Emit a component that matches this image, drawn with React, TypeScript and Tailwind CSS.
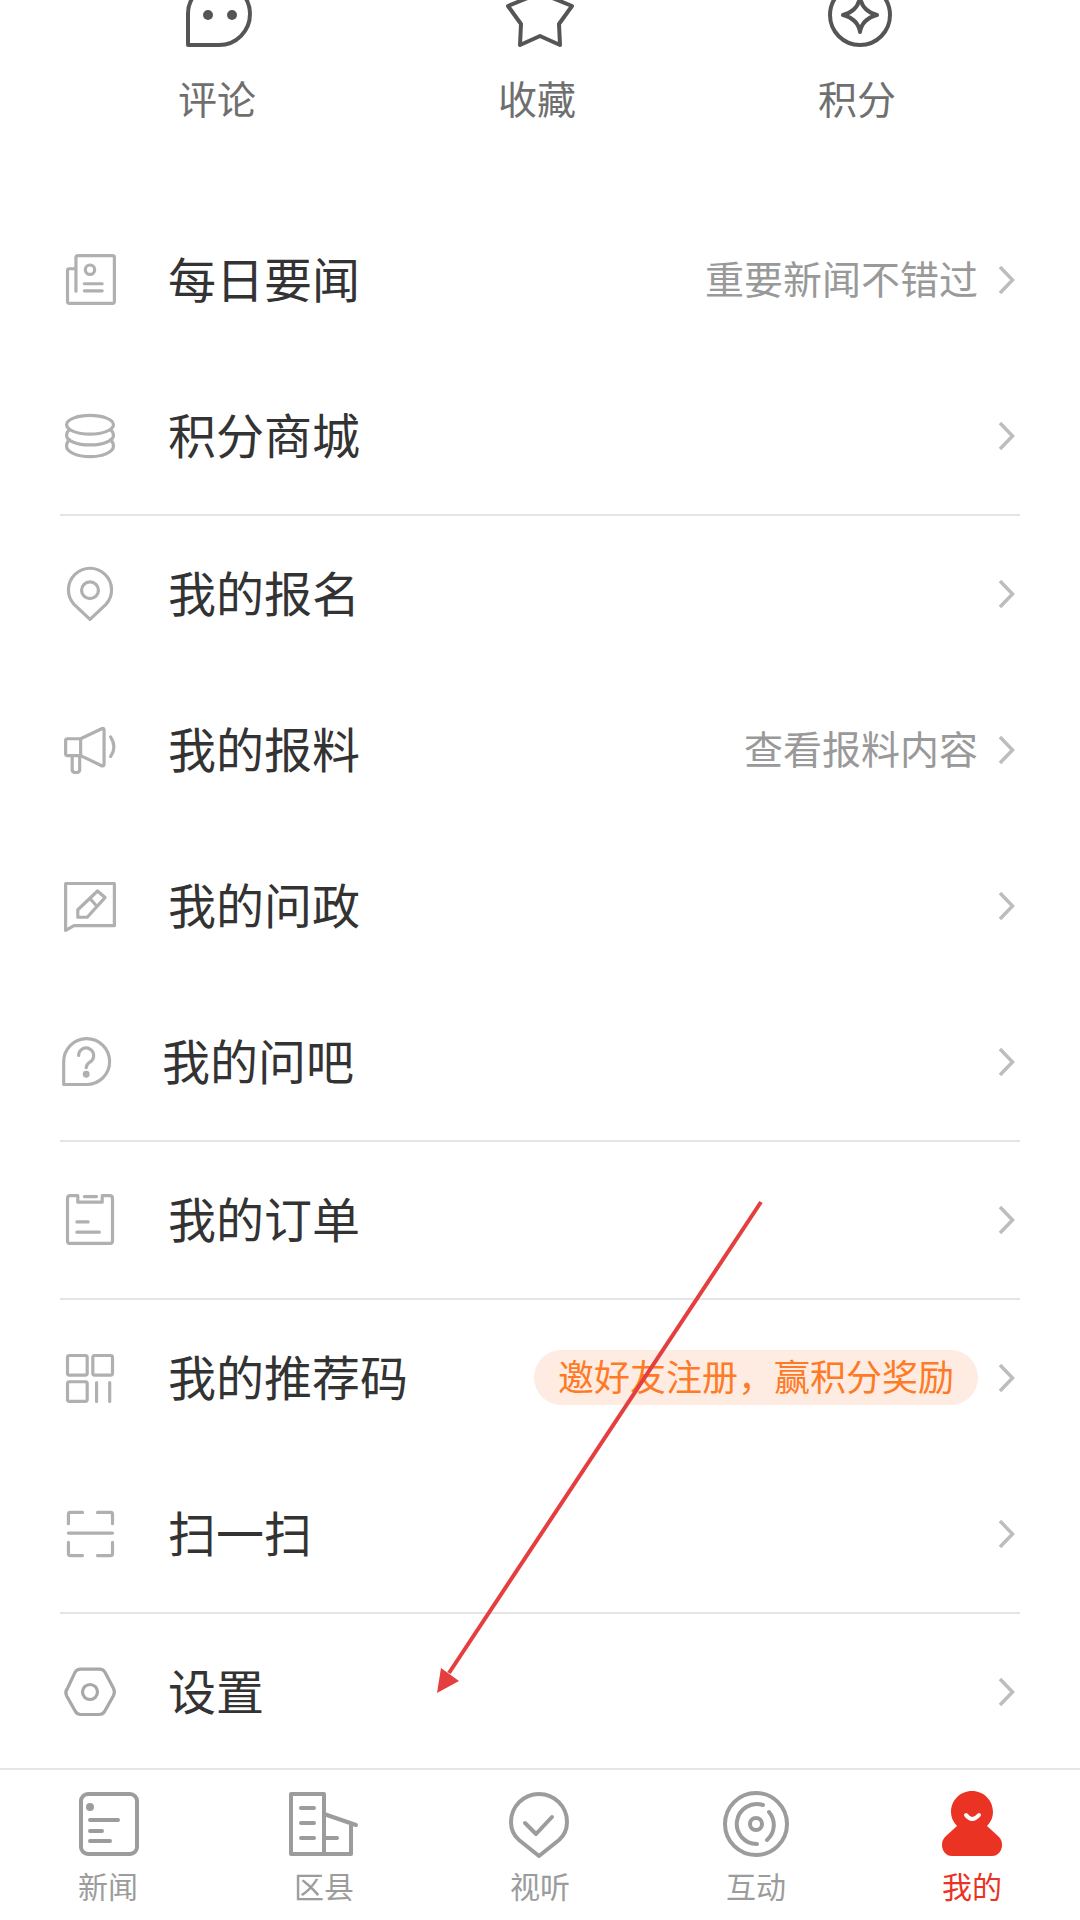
import type { ReactNode } from "react";

const font = "font-['Noto_Sans_CJK_SC','Noto_Sans',sans-serif]";

const MenuIcon = ({ children }: { children: ReactNode }) => (
  <svg
    viewBox="-2 -2 64 64"
    fill="none"
    stroke="#b0b0b0"
    strokeWidth="3.400"
    strokeLinecap="round"
    strokeLinejoin="round"
    className="h-[60px] w-[60px] shrink-0"
  >
    {children}
  </svg>
);

const icons: Record<string, ReactNode> = {
  news: (
    <>
      <path d="M15 42V6Q15 4 17 4H54Q56 4 56 6V53Q56 55 54 55H8Q6 55 6 53V20Q6 18 8 18H15" />
      <circle cx="30" cy="19" r="5" />
      <path d="M24 34H43M24 41.500H43" />
    </>
  ),
  coins: (
    <>
      <ellipse cx="30" cy="18" rx="25" ry="10" />
      <path d="M8 23Q5 26 5 29.500A25 10 0 0 0 55 29.500Q55 26 52 23" />
      <path d="M8 34Q5 37 5 41A25 11 0 0 0 55 41Q55 37 52 34" />
    </>
  ),
  pin: (
    <>
      <path d="M30 57L13 41A23 23 0 1 1 47 41Z" />
      <circle cx="30" cy="26" r="9" />
    </>
  ),
  horn: (
    <>
      <path d="M20 18H6Q4 18 4 20V34Q4 36 6 36H20Z" />
      <path d="M20 18L43 7Q45 6.500 45 9V45Q45 47.500 43 47L20 36" />
      <path d="M11 36V51Q11 54 15 54T19 51V36" />
      <path d="M52 16Q59 27 52 37" />
    </>
  ),
  edit: (
    <>
      <path d="M4 6H56V51H13L4 56Z" />
      <path d="M17 34L38 14L46 21L27 42H17Z" />
      <path d="M30 22L37 30" />
    </>
  ),
  ask: (
    <>
      <path d="M3 54V30A24.500 24.500 0 1 1 27 54Z" />
      <path d="M19 23A8 8 0 1 1 31 30Q27 32.500 27 36" />
      <circle cx="27" cy="43" r="2" fill="#b0b0b0" />
    </>
  ),
  order: (
    <>
      <path d="M17 4H9Q6 4 6 7V52Q6 55 9 55H51Q54 55 54 52V7Q54 4 51 4H43V11H17Z" />
      <path d="M24 5H37M16 32H28M16 43H40" />
    </>
  ),
  code: (
    <>
      <rect x="6" y="6" width="21" height="21" rx="2" />
      <rect x="33" y="6" width="21" height="21" rx="2" />
      <rect x="6" y="34" width="21" height="21" rx="2" />
      <path d="M37 35V55M51 35V55" />
    </>
  ),
  scan: (
    <path d="M7 19V9Q7 7 9 7H22M38 7H52Q54 7 54 9V19M7 39V51Q7 53 9 53H22M38 53H52Q54 53 54 51V39M7 29H54" />
  ),
  gear: (
    <>
      <path
        d="M6 26L14 9Q16 5.500 20 5.500H40Q44 5.500 46 9L55 26Q57 30 55 34L46 50Q44 54 40 54H20Q16 54 14 50L5 34Q3 30 6 26Z"
        stroke="#a8a8a8"
      />
      <circle cx="30" cy="30" r="8" stroke="#a8a8a8" />
    </>
  ),
};

type Row = {
  icon: string;
  label: string;
  hint?: string;
  pill?: string;
  shift?: boolean;
};

const groups: Row[][] = [
  [
    { icon: "news", label: "每日要闻", hint: "重要新闻不错过" },
    { icon: "coins", label: "积分商城" },
  ],
  [
    { icon: "pin", label: "我的报名" },
    { icon: "horn", label: "我的报料", hint: "查看报料内容" },
    { icon: "edit", label: "我的问政" },
    { icon: "ask", label: "我的问吧", shift: true },
  ],
  [{ icon: "order", label: "我的订单" }],
  [
    { icon: "code", label: "我的推荐码", pill: "邀好友注册，赢积分奖励" },
    { icon: "scan", label: "扫一扫" },
  ],
  [{ icon: "gear", label: "设置" }],
];

const MenuRow = ({ row }: { row: Row }) => (
  <div className="flex h-[156px] items-center">
    <div className={row.shift ? "-ml-[1px]" : ""}>
      <MenuIcon>{icons[row.icon]}</MenuIcon>
    </div>
    <span
      className={`${row.shift ? "ml-[43px]" : "ml-[48px]"} pb-[6px] text-[48px] leading-none text-[#333333]`}
    >
      {row.label}
    </span>
    <div className="ml-auto flex items-center">
      {row.hint && (
        <span className="pb-[6px] text-[39px] leading-none text-[#999999]">
          {row.hint}
        </span>
      )}
      {row.pill && (
        <span className="mb-[1px] flex h-[55px] items-center rounded-full bg-[#feece2] px-[24px] pb-[5px] text-[36px] leading-none text-[#ff7a26]">
          {row.pill}
        </span>
      )}
      <svg
        viewBox="0 0 19 32"
        fill="none"
        stroke="#bdbdbd"
        strokeWidth="3.500"
        className="ml-[19px] mr-[4px] h-[32px] w-[19px]"
      >
        <path d="M3 3L15.500 16L3 29" />
      </svg>
    </div>
  </div>
);

const topActions = [
  {
    label: "评论",
    icon: (
      <>
        <path d="M3 45V15A31 31 0 1 1 34 45Z" />
        <circle cx="23" cy="15" r="5" fill="#555555" stroke="none" />
        <circle cx="47" cy="15" r="5" fill="#555555" stroke="none" />
      </>
    ),
  },
  {
    label: "收藏",
    icon: (
      <path d="M35 -15L45 -3L67 6L54 24L55 45L35 36L15 45L16 24L3 6L25 -3Z" />
    ),
  },
  {
    label: "积分",
    icon: (
      <>
        <circle cx="35" cy="15" r="30" />
        <path d="M35 -3Q37 11 52 15Q37 19 35 32Q33 19 18 15Q33 11 35 -3Z" />
      </>
    ),
  },
];

const TabIcon = ({ children }: { children: ReactNode }) => (
  <svg
    viewBox="0 0 80 70"
    fill="none"
    stroke="#9c9c9c"
    strokeWidth="4"
    strokeLinecap="round"
    strokeLinejoin="round"
    className="h-[70px] w-[80px]"
  >
    {children}
  </svg>
);

const tabs = [
  {
    label: "新闻",
    icon: (
      <>
        <rect x="13" y="4" width="56" height="60" rx="7" />
        <circle cx="22" cy="17" r="4" fill="#9c9c9c" stroke="none" />
        <path d="M22 30H50M22 41H34M22 51H42" />
      </>
    ),
  },
  {
    label: "区县",
    icon: (
      <>
        <path d="M7 4H40V64H7Z" />
        <path d="M40 24L72 35M67 35V64H40" />
        <path d="M17 18H30M17 33H30M17 48H30M40 48H53" />
      </>
    ),
  },
  {
    label: "视听",
    icon: (
      <>
        <path d="M39 66L19 50Q11 43 11 32A28 28 0 1 1 67 32Q67 43 59 50Z" />
        <path d="M25 33L36 44L52 27" />
      </>
    ),
  },
  {
    label: "互动",
    icon: (
      <>
        <circle cx="40" cy="34" r="31" />
        <circle cx="40" cy="34" r="6" />
        <path d="M47 15A20 20 0 1 0 41 54M53 22A20 20 0 0 1 51 50" />
      </>
    ),
  },
  {
    label: "我的",
    active: true,
    icon: (
      <>
        <path
          d="M40 1C28 1 19 10.500 19 22C19 27 21 32 25 36L14 46C11 49 10 51 10 55C10 61 14 66 20 66H60C66 66 70 61 70 55C70 51 69 49 66 46L55 36C59 32 61 27 61 22C61 10.500 52 1 40 1Z"
          fill="#ea3323"
          stroke="none"
        />
        <path d="M34 25Q40 33 47 25" stroke="#ffffff" />
      </>
    ),
  },
];

export default function App() {
  return (
    <div
      className={`relative flex h-[1920px] w-[1080px] flex-col overflow-hidden bg-white ${font}`}
    >
      <div className="flex h-[202px] shrink-0 px-[57px]">
        {topActions.map((a) => (
          <div key={a.label} className="flex w-[320px] flex-col items-center">
            <svg
              viewBox="0 0 70 50"
              fill="none"
              stroke="#555555"
              strokeWidth="4"
              strokeLinejoin="round"
              className="h-[50px] w-[70px] translate-x-[3px]"
            >
              {a.icon}
            </svg>
            <span className="mt-[28px] text-[39px] leading-none text-[#6f6f6f]">
              {a.label}
            </span>
          </div>
        ))}
      </div>

      <div className="min-h-0 flex-1 overflow-hidden px-[60px]">
        {groups.map((group, i) => (
          <div key={i} className={i > 0 ? "border-t-2 border-[#e5e5e5]" : ""}>
            {group.map((row) => (
              <MenuRow key={row.label} row={row} />
            ))}
          </div>
        ))}
      </div>

      <div className="flex h-[152px] shrink-0 border-t-2 border-[#e5e5e5] bg-white pt-[20px]">
        {tabs.map((t) => (
          <div key={t.label} className="flex flex-1 flex-col items-center">
            <TabIcon>{t.icon}</TabIcon>
            <span
              className={`mt-[10px] text-[30px] leading-none ${t.active ? "text-[#ea3323]" : "text-[#9c9c9c]"}`}
            >
              {t.label}
            </span>
          </div>
        ))}
      </div>

      {/* red annotation arrow drawn over the page */}
      <svg
        viewBox="0 0 1080 1920"
        className="pointer-events-none absolute left-0 top-0 h-[1920px] w-[1080px]"
      >
        <path d="M761 1202L449 1673" stroke="#e53e3e" strokeWidth="4" fill="none" />
        <path d="M437 1693L441 1668L459 1681Z" fill="#e53e3e" />
      </svg>
    </div>
  );
}
